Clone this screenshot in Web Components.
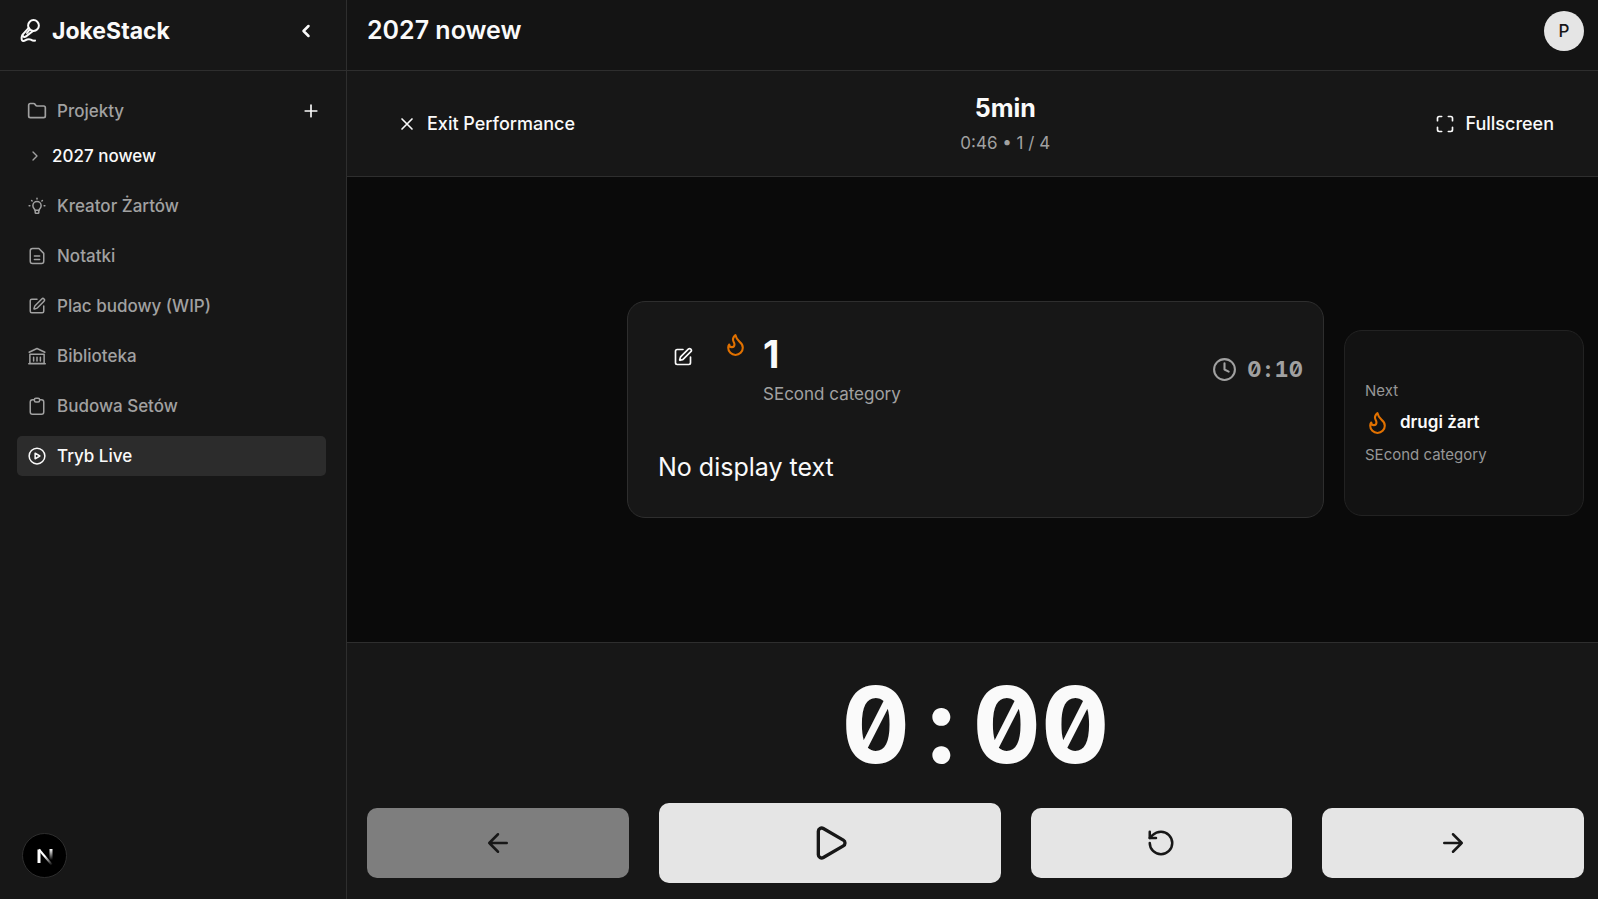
<!DOCTYPE html>
<html lang="pl">
<head>
<meta charset="utf-8">
<meta name="viewport" content="width=device-width, initial-scale=1">
<title>JokeStack</title>
<style>
  :root {
    --bg: #0a0a0a;
    --panel: #171717;
    --topbar: #141414;
    --line: #2e2e2e;
    --text: #fafafa;
    --muted: #a1a1a1;
    --primary: #e5e5e5;
    --flame: #e17100;
  }
  body {
    margin: 0;
    background: var(--bg);
    color: var(--text);
    font-family: Inter, "Liberation Sans", sans-serif;
    font-size: 17px;
    line-height: 25px;
  }
</style>
</head>
<body>
<joke-app>
  <side-bar slot="side">
    <nav-item icon="folder" plus>Projekty</nav-item>
    <nav-item icon="chevronRight" sub>2027 nowew</nav-item>
    <nav-item icon="bulb">Kreator Żartów</nav-item>
    <nav-item icon="note">Notatki</nav-item>
    <nav-item icon="pen">Plac budowy (WIP)</nav-item>
    <nav-item icon="library">Biblioteka</nav-item>
    <nav-item icon="clipboard">Budowa Setów</nav-item>
    <nav-item icon="playCircle" active>Tryb Live</nav-item>
  </side-bar>
  <top-bar initial="P">2027 nowew</top-bar>
  <performance-bar>
    <span slot="title">5min</span>
    <span slot="status">0:46 • 1 / 4</span>
  </performance-bar>
  <joke-stage>
    <joke-card slot="current">
      <span slot="title">1</span>
      <span slot="category">SEcond category</span>
      <time-code slot="time" value="0:10"></time-code>
      No display text
    </joke-card>
    <next-card slot="next">
      <span slot="title">drugi żart</span>
      <span slot="category">SEcond category</span>
    </next-card>
  </joke-stage>
  <live-controls>
    <time-code value="0:00"></time-code>
  </live-controls>
</joke-app>

<script>
const icons = {
  mic: '<circle cx="13.5" cy="6.500" r="5.400"/><path d="M8.700 8.800 2.400 15.800c-.7 1.800-1 4.200-.4 5.400.6 1 2 1 3.200.2 2.200-1.400 4-1.600 5.600-.8 1.200.7 2.600 1.200 4.200 1"/><path d="M13 12 6 17.400c-1.200.9-2.800.7-3.300-.8"/><path d="m9.800 10.500-2.800 3.500"/>',
  chevronLeft: '<path d="m15 18-6-6 6-6"/>',
  chevronRight: '<path d="m9 18 6-6-6-6"/>',
  folder: '<path d="M20 20a2 2 0 0 0 2-2V8a2 2 0 0 0-2-2h-7.900a2 2 0 0 1-1.690-.9L9.600 3.900A2 2 0 0 0 7.930 3H4a2 2 0 0 0-2 2v13a2 2 0 0 0 2 2Z"/>',
  plus: '<path d="M5 12h14M12 5v14"/>',
  bulb: '<path d="M9.200 17.500c0-1.700-2.700-2.600-2.700-6a5.500 5.500 0 0 1 11 0c0 3.400-2.700 4.300-2.700 6z"/><path d="M9.600 18v2.500a1 1 0 0 0 1 1h2.800a1 1 0 0 0 1-1V18"/><path d="M12 1.800v1M4.800 4.600l.7.700M19.200 4.600l-.7.700M1.500 11.800h1M21.500 11.800h1"/>',
  note: '<path d="M14.500 2H6a3 3 0 0 0-3 3v14a3 3 0 0 0 3 3h12a3 3 0 0 0 3-3V8.500z"/><path d="M8.500 12h7M8.500 16.500h7"/>',
  pen: '<path d="M12 3H5a2 2 0 0 0-2 2v14a2 2 0 0 0 2 2h14a2 2 0 0 0 2-2v-7"/><path d="M18.375 2.625a1 1 0 0 1 3 3l-9.013 9.014a2 2 0 0 1-.853.505l-2.873.84a.5.5 0 0 1-.62-.62l.84-2.873a2 2 0 0 1 .506-.852z"/>',
  library: '<path d="M1.500 7 12 2l10.500 5M2.500 9.500h19V22h-19zM1 22.200h22"/><path d="M7.500 13.500v5M12 13.500v5M16.500 13.500v5"/>',
  clipboard: '<path d="M8 3.500H6a3 3 0 0 0-3 3V20a3 3 0 0 0 3 3h12a3 3 0 0 0 3-3V6.500a3 3 0 0 0-3-3h-2"/><path d="M8.500 3.500a2 2 0 0 1 2-2h3a2 2 0 0 1 2 2v1a2 2 0 0 1-2 2h-3a2 2 0 0 1-2-2z"/>',
  playCircle: '<circle cx="12" cy="12" r="10.500"/><path d="M9.500 8.300v7.400l6.300-3.700z"/>',
  close: '<path d="M18 6 6 18M6 6l12 12"/>',
  maximize: '<path d="M8 3H5a2 2 0 0 0-2 2v3M21 8V5a2 2 0 0 0-2-2h-3M3 16v3a2 2 0 0 0 2 2h3M16 21h3a2 2 0 0 0 2-2v-3"/>',
  flame: '<path d="M8.500 14.500A2.500 2.500 0 0 0 11 12c0-1.380-.5-2-1-3-1.072-2.143-.224-4.054 2-6 .5 2.500 2 4.900 4 6.500 2 1.600 3 3.500 3 5.500a7 7 0 1 1-14 0c0-1.153.433-2.294 1-3a2.500 2.500 0 0 0 2.500 2.500z"/>',
  clock: '<circle cx="12" cy="12" r="10"/><path d="M12 6v6l4 2"/>',
  arrowLeft: '<path d="m12 19-7-7 7-7M19 12H5"/>',
  arrowRight: '<path d="M5 12h14M12 5l7 7-7 7"/>',
  play: '<path d="M5 5a2 2 0 0 1 3.008-1.728l11.997 6.998a2 2 0 0 1 .003 3.458l-12 7A2 2 0 0 1 5 19z"/>',
  reset: '<path d="M3 12a9 9 0 1 0 9-9 9.750 9.750 0 0 0-6.740 2.740L3 8"/><path d="M3 3v5h5"/>',
};

function icon(name, size = 20, stroke = 2) {
  return `<svg width="${size}" height="${size}" viewBox="0 0 24 24" fill="none" stroke="currentColor"
    stroke-width="${stroke}" stroke-linecap="round" stroke-linejoin="round" aria-hidden="true">${icons[name]}</svg>`;
}

// shared by every element
const base = `
  * { box-sizing: border-box; margin: 0; }
  svg { display: block; flex: none; }
  button { border: 0; padding: 0; background: none; color: inherit; font: inherit; cursor: pointer; }
`;

customElements.define("joke-app", class extends HTMLElement {
  constructor() {
    super();
    this.attachShadow({ mode: "open" }).innerHTML = `
      <style>${base}
        :host { display: flex; min-height: 100vh; }
        main { flex: 1; min-width: 0; display: flex; flex-direction: column; }
      </style>
      <slot name="side"></slot>
      <main><slot></slot></main>
    `;
  }
});

customElements.define("side-bar", class extends HTMLElement {
  constructor() {
    super();
    this.attachShadow({ mode: "open" }).innerHTML = `
      <style>${base}
        :host { display: block; flex: none; box-sizing: border-box; width: 347px; background: var(--panel); border-right: 1px solid var(--line); }
        header { display: flex; align-items: flex-start; justify-content: space-between; height: 71px; padding: 11px 20px; border-bottom: 1px solid var(--line); }
        .brand { display: flex; align-items: center; gap: 8px; height: 40px; font-size: 23px; font-weight: 700; }
        button { display: grid; place-items: center; width: 40px; height: 40px; }
        nav { display: flex; flex-direction: column; gap: 10px; padding: 20px 20px 20px 17px; }
        .dev { position: fixed; left: 22px; bottom: 21px; width: 45px; height: 45px; border: 1px solid var(--line); border-radius: 50%; background: #000; display: grid; place-items: center; }
      </style>
      <header>
        <div class="brand">${icon("mic", 24)}<span>JokeStack</span></div>
        <button aria-label="Zwiń">${icon("chevronLeft", 20, 3)}</button>
      </header>
      <nav><slot></slot></nav>
      <button class="dev" aria-label="Next.js">
        <svg width="20" height="20" viewBox="0 0 20 20" fill="none" stroke-width="2">
          <defs>
            <linearGradient id="a" gradientUnits="userSpaceOnUse" x1="10" y1="10" x2="17" y2="19"><stop stop-color="#fff"/><stop offset="1" stop-color="#fff" stop-opacity="0"/></linearGradient>
            <linearGradient id="b" gradientUnits="userSpaceOnUse" x1="16" y1="3" x2="16" y2="14"><stop stop-color="#fff"/><stop offset="1" stop-color="#fff" stop-opacity="0"/></linearGradient>
          </defs>
          <path d="M4 17V3.500" stroke="#fff" stroke-width="3"/>
          <path d="M4 3.500 17 19" stroke="url(#a)"/>
          <path d="M16 3v11" stroke="url(#b)" stroke-width="3"/>
        </svg>
      </button>
    `;
  }
});

customElements.define("nav-item", class extends HTMLElement {
  constructor() {
    super();
    const name = this.getAttribute("icon");
    const size = { folder: 20, chevronRight: 16 }[name] || 18;
    const plus = this.hasAttribute("plus") ? `<button aria-label="Dodaj projekt">${icon("plus")}</button>` : "";
    this.attachShadow({ mode: "open" }).innerHTML = `
      <style>${base}
        :host { display: flex; height: 40px; border-radius: 5px; color: var(--muted); font-weight: 500; }
        :host([active]) { background: #2c2c2c; color: var(--text); }
        :host([plus]) { margin-bottom: -5px; }
        :host([sub]) { color: var(--text); }
        :host([sub]) .icon { width: 15px; color: var(--muted); }
        a { flex: 1; display: flex; align-items: center; gap: 10px; padding: 0 10px; color: inherit; text-decoration: none; }
        .icon { flex: none; display: grid; place-items: center; width: 20px; }
        button { display: grid; place-items: center; width: 30px; color: var(--text); }
      </style>
      <a href="#"><span class="icon">${icon(name, size)}</span><slot></slot></a>${plus}
    `;
  }
});

customElements.define("top-bar", class extends HTMLElement {
  constructor() {
    super();
    this.attachShadow({ mode: "open" }).innerHTML = `
      <style>${base}
        :host { display: flex; align-items: flex-start; justify-content: space-between; box-sizing: border-box; height: 71px; padding: 11px 14px 0 20px; background: var(--topbar); border-bottom: 1px solid var(--line); }
        h1 { font-size: 25px; line-height: 38px; font-weight: 600; }
        button { width: 40px; height: 40px; border-radius: 50%; background: var(--primary); color: var(--panel); font-weight: 500; }
      </style>
      <h1><slot></slot></h1>
      <button>${this.getAttribute("initial")}</button>
    `;
  }
});

customElements.define("performance-bar", class extends HTMLElement {
  constructor() {
    super();
    this.attachShadow({ mode: "open" }).innerHTML = `
      <style>${base}
        :host { display: flex; align-items: center; justify-content: space-between; padding: 20px 14px 20px 20px; background: var(--panel); border-bottom: 1px solid var(--line); }
        button { display: flex; align-items: center; gap: 10px; height: 50px; padding: 0 30px; font-size: 18px; font-weight: 500; }
        div { display: grid; gap: 5px; text-align: center; }
        h2 { font-size: 25px; line-height: 35px; font-weight: 700; }
        p { color: var(--muted); }
      </style>
      <button>${icon("close")}Exit Performance</button>
      <div>
        <h2><slot name="title"></slot></h2>
        <p><slot name="status"></slot></p>
      </div>
      <button>${icon("maximize")}Fullscreen</button>
    `;
  }
});

customElements.define("joke-stage", class extends HTMLElement {
  constructor() {
    super();
    this.attachShadow({ mode: "open" }).innerHTML = `
      <style>${base}
        :host { flex: 1; display: grid; grid-template-columns: 240px minmax(0, 1fr) 240px; gap: 20px; align-items: center; padding: 20px 14px 20px 20px; }
      </style>
      <slot name="previous"><div></div></slot>
      <slot name="current"></slot>
      <slot name="next"></slot>
    `;
  }
});

// m:ss with slashed zeros; the colon takes a full digit cell
customElements.define("time-code", class extends HTMLElement {
  constructor() {
    super();
    const [min, sec] = this.getAttribute("value").split(":");
    this.attachShadow({ mode: "open" }).innerHTML = `
      <style>
        :host { display: block; font-weight: 700; font-feature-settings: "tnum", "zero", "calt" 0; }
        .colon { padding: 0 0.16em; }
      </style>
      ${min}<span class="colon">:</span>${sec}
    `;
  }
});

customElements.define("joke-card", class extends HTMLElement {
  constructor() {
    super();
    this.attachShadow({ mode: "open" }).innerHTML = `
      <style>${base}
        :host { display: flex; flex-direction: column; gap: 40px; box-sizing: border-box; padding: 30px 20px 30px 30px; background: var(--panel); border: 1px solid var(--line); border-radius: 18px; }
        header, .info, .time { display: flex; }
        header { justify-content: space-between; }
        .info { gap: 15px; }
        .info > svg { color: var(--flame); }
        button { display: grid; place-items: center; width: 50px; height: 50px; }
        h2 { font-size: 38px; line-height: 45px; font-weight: 700; margin-bottom: 5px; }
        .category { color: var(--muted); }
        .time { align-items: center; gap: 10px; color: var(--muted); font-size: 22px; }
        .text { font-size: 25px; line-height: 40px; }
      </style>
      <header>
        <div class="info">
          <button aria-label="Edit">${icon("pen")}</button>
          ${icon("flame", 25)}
          <div>
            <h2><slot name="title"></slot></h2>
            <p class="category"><slot name="category"></slot></p>
          </div>
        </div>
        <div class="time">${icon("clock", 25)}<slot name="time"></slot></div>
      </header>
      <p class="text"><slot></slot></p>
    `;
  }
});

customElements.define("next-card", class extends HTMLElement {
  constructor() {
    super();
    this.attachShadow({ mode: "open" }).innerHTML = `
      <style>${base}
        :host { display: flex; flex-direction: column; gap: 10px; box-sizing: border-box; margin-top: 26px; padding: 50px 20px; background: #121212; border: 1px solid #222; border-radius: 18px; }
        p { color: #979797; font-size: 15px; line-height: 20px; }
        h3 { display: flex; align-items: center; gap: 10px; height: 24px; font-size: 17px; font-weight: 600; }
        svg { color: var(--flame); }
      </style>
      <p>Next</p>
      <h3>${icon("flame", 25)}<slot name="title"></slot></h3>
      <p><slot name="category"></slot></p>
    `;
  }
});

customElements.define("live-controls", class extends HTMLElement {
  constructor() {
    super();
    this.attachShadow({ mode: "open" }).innerHTML = `
      <style>${base}
        :host { display: flex; flex-direction: column; gap: 28px; padding: 32px 14px 16px 20px; background: var(--panel); border-top: 1px solid var(--line); }
        .clock { font-size: 106px; line-height: 100px; text-align: center; }
        .buttons { display: flex; align-items: center; gap: 30px; }
        button { flex: 1 1 0; display: grid; place-items: center; height: 70px; border-radius: 10px; background: var(--primary); color: var(--panel); }
        .play { flex-basis: 80px; height: 80px; }
        button:disabled { background: #7e7e7e; cursor: default; }
      </style>
      <div class="clock" role="timer"><slot></slot></div>
      <div class="buttons">
        <button disabled aria-label="Previous">${icon("arrowLeft", 30)}</button>
        <button class="play" aria-label="Start">${icon("play", 40)}</button>
        <button aria-label="Reset">${icon("reset", 30)}</button>
        <button aria-label="Next">${icon("arrowRight", 30)}</button>
      </div>
    `;
  }
});
</script>
</body>
</html>
